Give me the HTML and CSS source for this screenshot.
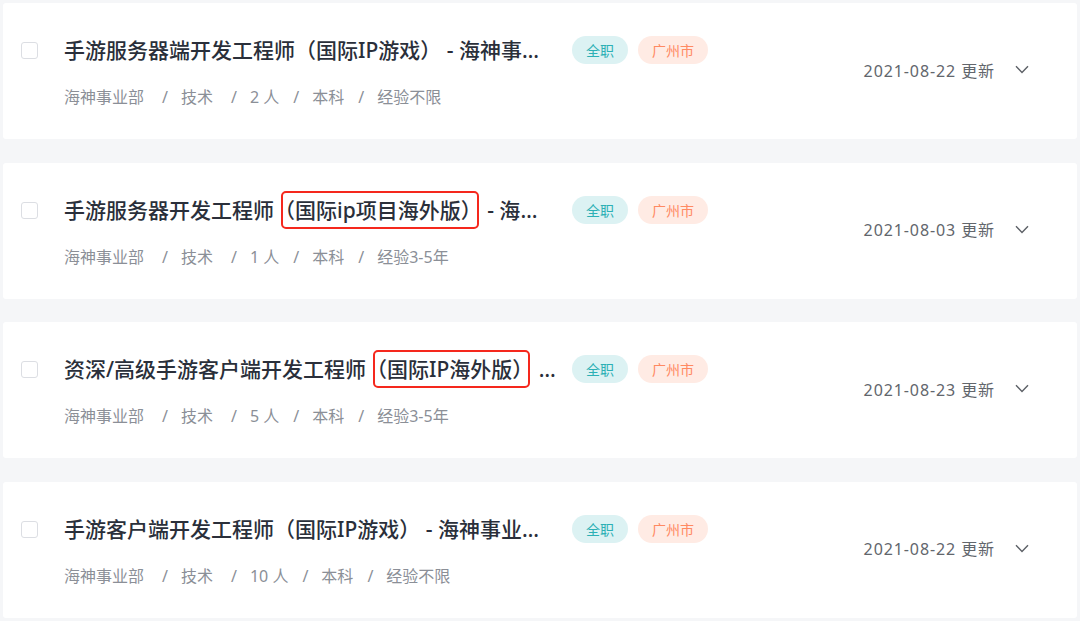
FILE: index.html
```html
<!DOCTYPE html>
<html lang="zh-CN">
<head>
    <meta charset="UTF-8">
    <title>职位列表</title>
    <link rel="stylesheet" href="styles.css">
</head>
<body>
    <div class="job-list">
        <div class="job">
            <span class="check"></span>
            <div class="info">
                <div class="head">
                    <div class="title">手游服务器端开发工程师（国际IP游戏） - 海神事业部</div>
                    <span class="tag tag-type">全职</span>
                    <span class="tag tag-city">广州市</span>
                </div>
                <div class="meta">
                    <span class="wide">海神事业部</span><i>/</i><span class="wide">技术</span><i>/</i><span>2 人</span><i>/</i><span>本科</span><i>/</i><span>经验不限</span>
                </div>
            </div>
            <div class="date">2021-08-22 更新</div>
            <svg class="arrow" width="14" height="9" viewBox="0 0 14 9"><path d="M1 1.2 L7 7.6 L13 1.2" fill="none" stroke="#5c6066" stroke-width="1.4"/></svg>
        </div>

        <div class="job">
            <span class="check"></span>
            <div class="info">
                <div class="head">
                    <div class="title">手游服务器开发工程师<span class="mark">（国际ip项目海外版）</span> - 海神事业部</div>
                    <span class="tag tag-type">全职</span>
                    <span class="tag tag-city">广州市</span>
                </div>
                <div class="meta">
                    <span class="wide">海神事业部</span><i>/</i><span class="wide">技术</span><i>/</i><span>1 人</span><i>/</i><span>本科</span><i>/</i><span>经验3-5年</span>
                </div>
            </div>
            <div class="date">2021-08-03 更新</div>
            <svg class="arrow" width="14" height="9" viewBox="0 0 14 9"><path d="M1 1.2 L7 7.6 L13 1.2" fill="none" stroke="#5c6066" stroke-width="1.4"/></svg>
        </div>

        <div class="job">
            <span class="check"></span>
            <div class="info">
                <div class="head">
                    <div class="title">资深/高级手游客户端开发工程师<span class="mark">（国际IP海外版）</span> - 海神事业部</div>
                    <span class="tag tag-type">全职</span>
                    <span class="tag tag-city">广州市</span>
                </div>
                <div class="meta">
                    <span class="wide">海神事业部</span><i>/</i><span class="wide">技术</span><i>/</i><span>5 人</span><i>/</i><span>本科</span><i>/</i><span>经验3-5年</span>
                </div>
            </div>
            <div class="date">2021-08-23 更新</div>
            <svg class="arrow" width="14" height="9" viewBox="0 0 14 9"><path d="M1 1.2 L7 7.6 L13 1.2" fill="none" stroke="#5c6066" stroke-width="1.4"/></svg>
        </div>

        <div class="job">
            <span class="check"></span>
            <div class="info">
                <div class="head">
                    <div class="title">手游客户端开发工程师（国际IP游戏） - 海神事业部（广州）</div>
                    <span class="tag tag-type">全职</span>
                    <span class="tag tag-city">广州市</span>
                </div>
                <div class="meta">
                    <span class="wide">海神事业部</span><i>/</i><span class="wide">技术</span><i>/</i><span>10 人</span><i>/</i><span>本科</span><i>/</i><span>经验不限</span>
                </div>
            </div>
            <div class="date">2021-08-22 更新</div>
            <svg class="arrow" width="14" height="9" viewBox="0 0 14 9"><path d="M1 1.2 L7 7.6 L13 1.2" fill="none" stroke="#5c6066" stroke-width="1.4"/></svg>
        </div>
    </div>
</body>
</html>
```

FILE: styles.css
```css
body {
    margin: 0;
    background-color: #f5f6f8;
    font-family: "Noto Sans", "Noto Sans CJK SC", sans-serif;
}
.job-list {
    display: flex;
    flex-direction: column;
    gap: 23.5px;
    padding: 3px 3px;
}
.job {
    display: flex;
    align-items: center;
    height: 136px;
    padding: 0 48px 0 18px;
    background-color: #fff;
    border-radius: 3px;
}
.check {
    align-self: flex-start;
    width: 15px;
    height: 15px;
    margin: 39px 26px 0 0;
    border: 1px solid #dcdee3;
    border-radius: 3px;
    background: #fff;
}
.info {
    align-self: flex-start;
    padding-top: 24px;
}
.head {
    display: flex;
    align-items: center;
}
.title {
    width: 494px;
    font-size: 21px;
    font-weight: 500;
    line-height: 46px;
    color: #2a2f3a;
    white-space: nowrap;
    overflow: hidden;
    text-overflow: ellipsis;
}
.mark {
    position: relative;
}
.mark::after {
    content: "";
    position: absolute;
    left: 7px;
    right: 3px;
    top: -5px;
    bottom: -5px;
    border: 2.5px solid #f5281d;
    border-radius: 5px;
}
.tag {
    height: 28px;
    line-height: 28px;
    padding: 0 14px;
    border-radius: 14px;
    font-family: "Noto Sans CJK SC", sans-serif;
    font-size: 14px;
    margin-left: 10px;
}
.tag-type {
    margin-left: 14px;
    background-color: #dcf2f3;
    color: #2db0b5;
}
.tag-city {
    background-color: #ffebe4;
    color: #ff8a62;
}
.meta {
    margin-top: 13px;
    font-size: 16px;
    line-height: 22px;
    color: #8b8f97;
}
.meta i {
    font-style: normal;
    margin: 0 13px 0 14px;
}
.meta .wide {
    margin-right: 4px;
}
.date {
    margin-left: auto;
    margin-bottom: 3px;
    font-size: 16px;
    letter-spacing: 0.9px;
    color: #62666c;
}
.arrow {
    margin-left: 20px;
    margin-bottom: 3px;
}
```
